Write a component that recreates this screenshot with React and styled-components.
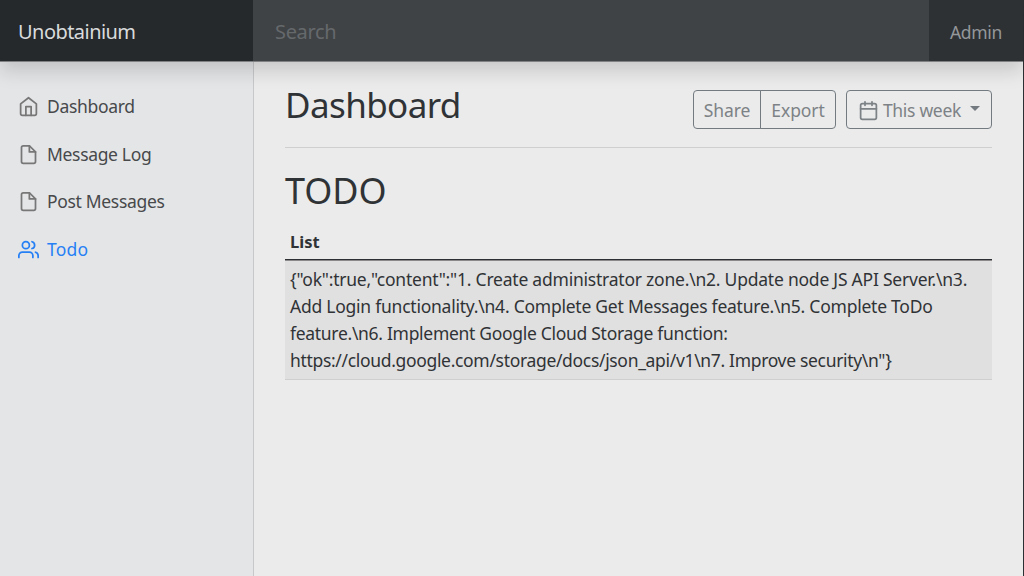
import React from "react";
import styled, { createGlobalStyle } from "styled-components";

const GlobalStyle = createGlobalStyle`
  * { box-sizing: border-box; }
  body {
    margin: 0;
    background: #ebebeb;
    color: #303336;
    font-family: "Noto Sans", "Open Sans", sans-serif;
    font-size: 17.5px;
    line-height: 27px;
    overflow: hidden;
  }
`;

const Page = styled.div`
  height: 576px;
  display: flex;
  flex-direction: column;
  border-right: 1px solid #2d3033;
`;

const Navbar = styled.header`
  display: flex;
  flex: none;
  height: 62px;
  position: relative;
  z-index: 1;
  background: #2d3134;
  border-bottom: 1px solid #7f8183;
  box-shadow: 0 9px 18px rgba(0, 0, 0, 0.15);
`;

const Brand = styled.div`
  width: 253px;
  padding: 18px 18px;
  background: #26292c;
  color: #d9dbdc;
  font-size: 20px;
  letter-spacing: -0.55px;
  white-space: nowrap;
`;

const SearchField = styled.div`
  flex: 1;
  padding: 18px 22px;
  background: #404345;
  color: #65696c;
  font-size: 20px;
  letter-spacing: -0.35px;
`;

const AdminLink = styled.a`
  width: 94px;
  padding: 19px 0 0 21px;
  color: #94979a;
  letter-spacing: -0.35px;
  white-space: nowrap;
`;

const Body = styled.div`
  display: flex;
  flex: 1;
`;

const Sidebar = styled.nav`
  width: 254px;
  flex: none;
  padding: 21px 18px;
  background: #e4e5e7;
  border-right: 1px solid #c7c8ca;
`;

const NavItem = styled.a`
  display: flex;
  align-items: center;
  gap: 9px;
  height: 47.6px;
  color: ${(p) => (p.$active ? "#2680f5" : "#47494b")};
  letter-spacing: ${(p) => (p.$active ? "0.25px" : "-0.33px")};
  white-space: nowrap;

  svg { color: ${(p) => (p.$active ? "#2680f5" : "#777")}; }
`;

const Main = styled.main`
  flex: 1;
  padding: 18px 31px 0;
`;

const Heading = styled.header`
  display: flex;
  justify-content: space-between;
  height: 68px;
  margin-bottom: 18px;
  border-bottom: 1px solid #cdcfd0;
`;

const Title = styled.h1`
  margin: 0;
  font-size: ${(p) => p.$size || 35}px;
  font-weight: 400;
  line-height: 50px;
  letter-spacing: ${(p) => p.$spacing};
`;

const Toolbar = styled.div`
  display: flex;
  gap: 10px;
  padding-top: 10px;
`;

const ButtonGroup = styled.div`
  display: flex;
`;

const Button = styled.button`
  display: flex;
  align-items: center;
  justify-content: center;
  gap: 5px;
  width: ${(p) => p.$width}px;
  height: 39px;
  padding: 1px 0 0;
  border: 1px solid #737b81;
  border-radius: 4px;
  background: transparent;
  color: #7d8286;
  font: inherit;
  letter-spacing: ${(p) => p.$spacing || "-0.1px"};
  white-space: nowrap;

  ${ButtonGroup} &:first-child { border-radius: 4px 0 0 4px; }
  ${ButtonGroup} &:last-child { border-radius: 0 4px 4px 0; margin-left: -1px; }
`;

const Caret = styled.span`
  margin: -4px 0 0 4px;
  border: 5.5px solid transparent;
  border-top-color: #737b81;
  border-bottom: 0;
`;

const Table = styled.table`
  width: 100%;
  margin-top: 7px;
  border-collapse: separate;
  border-spacing: 0;
`;

const HeadCell = styled.th`
  height: 37px;
  padding: 0 5px;
  border-bottom: 1px solid #2d3033;
  text-align: left;
  font-weight: 700;
  font-size: 16.5px;
`;

const Cell = styled.td`
  height: 120px;
  padding: 4px 5px 5px;
  background: #e0e0e0;
  border-top: 1px solid #8b8989;
  border-bottom: 1px solid #cdcfd0;
`;

const Line = styled.span`
  display: block;
  white-space: nowrap;
  letter-spacing: ${(p) => p.$spacing};
`;

const icons = {
  home: <><path d="M3 9l9-7 9 7v11a2 2 0 0 1-2 2H5a2 2 0 0 1-2-2z" /><path d="M9 22V12h6v10" /></>,
  file: <><path d="M13 2H6a2 2 0 0 0-2 2v16a2 2 0 0 0 2 2h12a2 2 0 0 0 2-2V9z" /><path d="M13 2v7h7" /></>,
  users: <><path d="M17 21v-2a4 4 0 0 0-4-4H5a4 4 0 0 0-4 4v2" /><circle cx="9" cy="7" r="4" /><path d="M23 21v-2a4 4 0 0 0-3-3.87M16 3.13a4 4 0 0 1 0 7.75" /></>,
  calendar: <><rect x="3" y="4" width="18" height="18" rx="2" /><path d="M16 2v4M8 2v4M3 10h18" /></>,
};

const Svg = styled.svg`
  width: 21px;
  height: 21px;
  flex: none;
  margin-right: -1px;
  fill: none;
  stroke: currentColor;
  stroke-width: 2;
  stroke-linecap: round;
  stroke-linejoin: round;
`;

const Icon = ({ name }) => <Svg viewBox="0 0 24 24">{icons[name]}</Svg>;

const links = [
  { icon: "home", label: "Dashboard" },
  { icon: "file", label: "Message Log" },
  { icon: "file", label: "Post Messages" },
  { icon: "users", label: "Todo", active: true },
];

const lines = [
  { text: '{"ok":true,"content":"1. Create administrator zone.\\n2. Update node JS API Server.\\n3.', spacing: "-0.225px" },
  { text: "Add Login functionality.\\n4. Complete Get Messages feature.\\n5. Complete ToDo", spacing: "-0.24px" },
  { text: "feature.\\n6. Implement Google Cloud Storage function:", spacing: "-0.3px" },
  { text: 'https://cloud.google.com/storage/docs/json_api/v1\\n7. Improve security\\n"}', spacing: "-0.325px" },
];

export default function App() {
  return (
    <>
      <GlobalStyle />
      <Page>
        <Navbar>
          <Brand>Unobtainium</Brand>
          <SearchField>Search</SearchField>
          <AdminLink>Admin</AdminLink>
        </Navbar>
        <Body>
          <Sidebar>
            {links.map((l) => (
              <NavItem key={l.label} $active={l.active}>
                <Icon name={l.icon} />
                <span>{l.label}</span>
              </NavItem>
            ))}
          </Sidebar>
          <Main>
            <Heading>
              <Title $spacing="-0.6px">Dashboard</Title>
              <Toolbar>
                <ButtonGroup>
                  <Button $width={68}>Share</Button>
                  <Button $width={76}>Export</Button>
                </ButtonGroup>
                <Button $width={146} $spacing="-0.3px">
                  <Icon name="calendar" />
                  <span>This week</span>
                  <Caret />
                </Button>
              </Toolbar>
            </Heading>
            <Title as="h2" $size={36} $spacing="-0.1px">TODO</Title>
            <Table>
              <thead>
                <tr><HeadCell>List</HeadCell></tr>
              </thead>
              <tbody>
                <tr>
                  <Cell>
                    {lines.map((l) => <Line key={l.text} $spacing={l.spacing}>{l.text}</Line>)}
                  </Cell>
                </tr>
              </tbody>
            </Table>
          </Main>
        </Body>
      </Page>
    </>
  );
}
